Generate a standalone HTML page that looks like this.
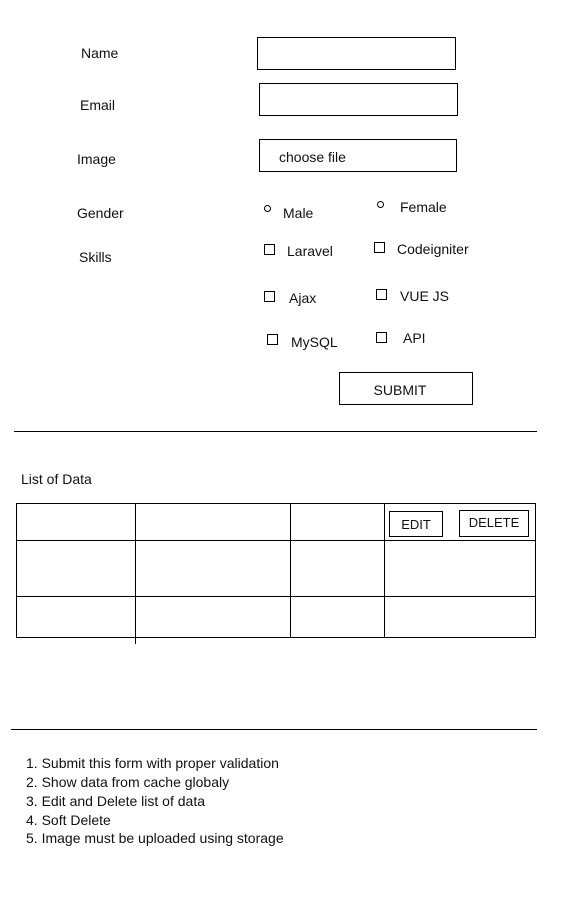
<!DOCTYPE html>
<html><head><meta charset="utf-8"><style>
body{margin:0;width:577px;height:900px;background:#fff;position:relative;overflow:hidden;font-family:"Liberation Sans",sans-serif;font-size:14px;color:#111}
.t{position:absolute;line-height:16px;white-space:nowrap}
.b{position:absolute;border:1px solid #000;box-sizing:border-box}
.h{position:absolute;height:1px;background:#000}
.v{position:absolute;width:1px;background:#000}
.cb{position:absolute;width:11px;height:11px;border:1px solid #000;box-sizing:border-box}
.rd{position:absolute;width:7px;height:7px;border:1px solid #000;border-radius:50%;box-sizing:border-box}
</style></head><body>
<div class="t" style="left:81px;top:45px">Name</div>
<div class="b" style="left:257px;top:37px;width:199px;height:33px"></div>
<div class="t" style="left:80px;top:97px">Email</div>
<div class="b" style="left:259px;top:83px;width:199px;height:33px"></div>
<div class="t" style="left:77px;top:151px">Image</div>
<div class="b" style="left:259px;top:139px;width:198px;height:33px"></div>
<div class="t" style="left:279px;top:149px">choose file</div>
<div class="t" style="left:77px;top:205px">Gender</div>
<div class="rd" style="left:264px;top:205px"></div>
<div class="t" style="left:283px;top:205px">Male</div>
<div class="rd" style="left:377px;top:201px"></div>
<div class="t" style="left:400px;top:199px">Female</div>
<div class="t" style="left:79px;top:249px">Skills</div>
<div class="cb" style="left:264px;top:244px"></div>
<div class="t" style="left:287px;top:243px">Laravel</div>
<div class="cb" style="left:374px;top:242px"></div>
<div class="t" style="left:397px;top:241px">Codeigniter</div>
<div class="cb" style="left:264px;top:291px"></div>
<div class="t" style="left:289px;top:290px">Ajax</div>
<div class="cb" style="left:376px;top:289px"></div>
<div class="t" style="left:400px;top:288px">VUE JS</div>
<div class="cb" style="left:267px;top:334px"></div>
<div class="t" style="left:291px;top:334px">MySQL</div>
<div class="cb" style="left:376px;top:332px"></div>
<div class="t" style="left:403px;top:330px">API</div>
<div class="b" style="left:339px;top:372px;width:134px;height:33px"></div>
<div class="t" style="left:333px;top:382px;width:134px;text-align:center">SUBMIT</div>
<div class="h" style="left:14px;top:431px;width:523px"></div>
<div class="t" style="left:21px;top:471px">List of Data</div>
<div class="b" style="left:16px;top:503px;width:520px;height:135px"></div>
<div class="h" style="left:16px;top:540px;width:520px"></div>
<div class="h" style="left:16px;top:596px;width:520px"></div>
<div class="v" style="left:135px;top:503px;height:141px"></div>
<div class="v" style="left:290px;top:503px;height:135px"></div>
<div class="v" style="left:384px;top:503px;height:135px"></div>
<div class="b" style="left:389px;top:511px;width:54px;height:26px"></div>
<div class="t" style="left:389px;top:517px;width:54px;text-align:center;font-size:13px">EDIT</div>
<div class="b" style="left:459px;top:510px;width:70px;height:27px"></div>
<div class="t" style="left:459px;top:515px;width:70px;text-align:center;font-size:13px">DELETE</div>
<div class="h" style="left:11px;top:729px;width:526px"></div>
<div class="t" style="left:26px;top:755px">1. Submit this form with proper validation</div>
<div class="t" style="left:26px;top:774px">2. Show data from cache globaly</div>
<div class="t" style="left:26px;top:793px">3. Edit and Delete list of data</div>
<div class="t" style="left:26px;top:812px">4. Soft Delete</div>
<div class="t" style="left:26px;top:830px">5. Image must be uploaded using storage</div>
</body></html>
